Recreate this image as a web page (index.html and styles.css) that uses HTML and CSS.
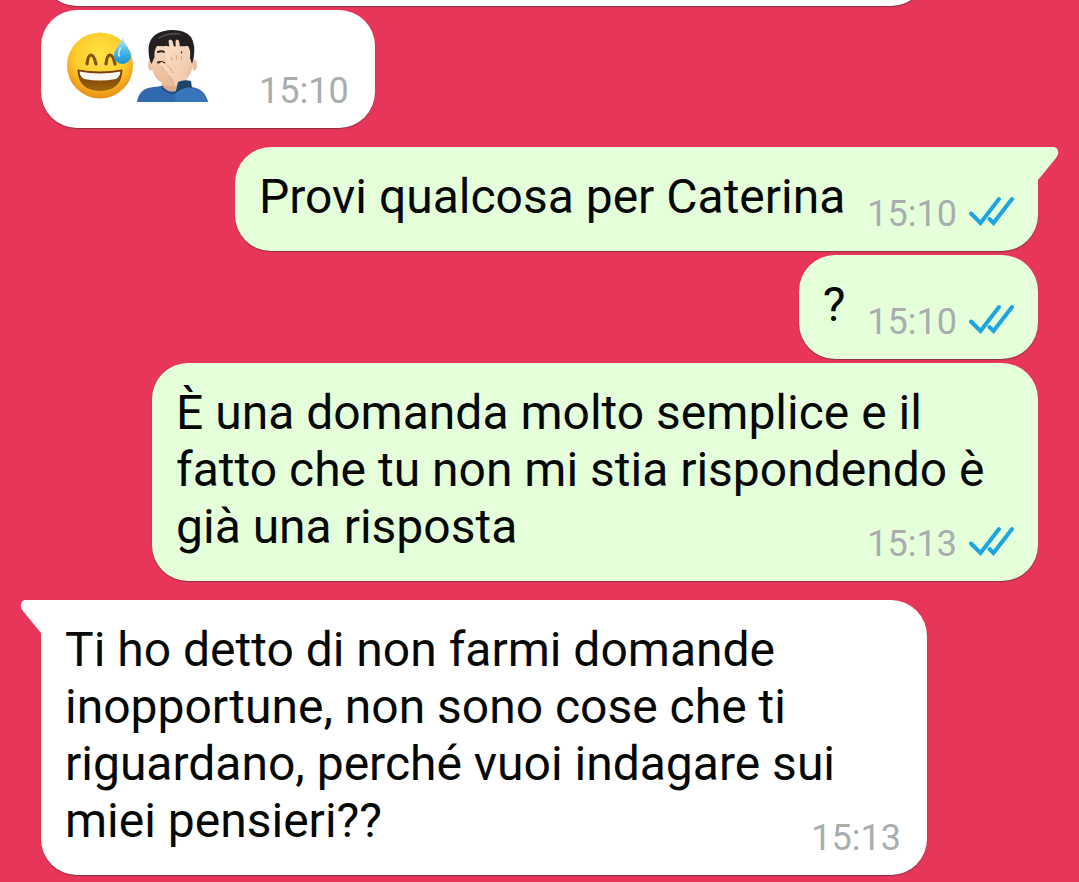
FILE: index.html
```html
<!DOCTYPE html>
<html lang="it">
<head>
<meta charset="utf-8">
<meta name="viewport" content="width=device-width, initial-scale=1">
<title>Chat</title>
<link rel="stylesheet" href="styles.css">
</head>
<body>
<svg class="defs" aria-hidden="true">
  <defs>
    <symbol id="ticks" viewBox="0 0 45 30">
      <path d="M2 17.500 L11.500 27 L30 3 M20.500 23 L24.500 27 L43 3" fill="none" stroke="#1ca5e0" stroke-width="4" stroke-linecap="round" stroke-linejoin="miter"/>
    </symbol>
    <radialGradient id="face" cx=".5" cy=".36" r=".66">
      <stop offset="0" stop-color="#ffe545"/><stop offset=".6" stop-color="#ffcb2c"/><stop offset="1" stop-color="#e98712"/>
    </radialGradient>
    <linearGradient id="drop" x1="0" y1="0" x2="0" y2="1">
      <stop offset="0" stop-color="#c3ecfa"/><stop offset=".5" stop-color="#4fbdec"/><stop offset="1" stop-color="#168fd6"/>
    </linearGradient>
    <linearGradient id="mouth" x1="0" y1="0" x2="0" y2="1">
      <stop offset="0" stop-color="#6b3a06"/><stop offset="1" stop-color="#a0640c"/>
    </linearGradient>
    <linearGradient id="skin" x1="0" y1="0" x2="0" y2="1">
      <stop offset="0" stop-color="#f9dcc3"/><stop offset="1" stop-color="#e8b894"/>
    </linearGradient>
    <linearGradient id="hand" x1="0" y1="0" x2="1" y2="1">
      <stop offset="0" stop-color="#fbe0c8"/><stop offset="1" stop-color="#f1c7a8"/>
    </linearGradient>
  </defs>
</svg>
<main class="chat">
  <div class="bubble in previous"></div>

  <div class="bubble in emoji-bubble">
    <span class="emojis">
      <svg class="emoji" viewBox="0 0 72 76" role="img" aria-label="Faccina sorridente con goccia di sudore">
        <circle cx="35" cy="37.500" r="33" fill="url(#face)"/>
        <path d="M22 36 Q23 27 26 27 Q29 27 31 36 M41 36 Q42 27 45 27 Q48 27 50 36" fill="none" stroke="#85500c" stroke-width="3.200" stroke-linecap="round"/>
        <path d="M12.500 41.500 Q35 45.500 57.500 41.500 Q57 62.500 35 63 Q13 62.500 12.500 41.500Z" fill="url(#mouth)"/>
        <path d="M14.500 43.500 Q35 47.500 55.500 43.500 Q55 49 51 51 Q35 54 19 51 Q15 49 14.500 43.500Z" fill="#f8f6f0"/>
        <path d="M57.500 9 C59 16 66 22 66 27.500 A8.500 8.500 0 0 1 49 27.500 C49 22 55.500 17 57.500 9Z" fill="url(#drop)"/>
        <path d="M55.500 20 Q52.500 26 54.500 28" fill="none" stroke="#d8f4fd" stroke-width="1.500" stroke-linecap="round"/>
      </svg>
      <svg class="emoji" viewBox="0 0 72 76" role="img" aria-label="Uomo che si copre il volto">
        <path d="M25 50 H42 V68 H25Z" fill="#dda986"/>
        <path d="M0 74 Q2 60 17 59 L25 58 Q32 67 43 62 L55 59 Q68 61 71 74Z" fill="#3268ad"/>
        <path d="M24 58 Q32 69 43 63" fill="none" stroke="#244f87" stroke-width="2"/>
        <ellipse cx="13.500" cy="37" rx="2.500" ry="5.500" fill="#ecc09f"/>
        <ellipse cx="57.500" cy="37" rx="2.500" ry="5.500" fill="#ecc09f"/>
        <path d="M14 16 H56 V36 Q55 48 45 55 Q35 62 26 56 Q15 49 14 36Z" fill="url(#skin)"/>
        <path d="M14.500 36 L12.500 31 Q9 14 18 7 Q25 2 36 2 Q48 2 54 9 Q59 17 56.500 31 L55 36 L53 30 Q54 22 51 18 L40 18.500 L20 18 Q17 22 17.500 29Z" fill="#241f20"/>
        <path d="M22 10 Q30 5 42 6" fill="none" stroke="#4b4444" stroke-width="2" stroke-linecap="round"/>
        <path d="M21 24 Q24 22.500 28 24 M43 24.500 H47 M21 34.500 Q24 33.500 27 35" fill="none" stroke="#30231f" stroke-width="2" stroke-linecap="round"/>
        <path d="M38 58 Q36 51 29 46 L23 37 Q22 34 25 34 L30 37 L27 20 Q27 17 30 18 L34 29 L31.500 13 Q33 10 35.500 13 L39 27 L38.500 13 Q40 10 42 13 L44.500 28 L46 20 Q49 18 50 21 L50.500 39 Q49 48 50 57Z" fill="url(#hand)"/>
        <path d="M30 37 Q35 41 36 45 M34 29 L35.500 33 M39 27 L40 32 M44.500 28 V32 M24 38 L30 46 Q35 50 37 56" fill="none" stroke="#d8a581" stroke-width="1"/>
        <path d="M39 74 Q36 65 43 58 L53 60 Q67 63 71 74Z" fill="#3975b9"/>
        <path d="M38.500 65 L41 54 Q47 51 54 53 L55 60 Q46 59 38.500 65Z" fill="#1d456c"/>
      </svg>
    </span>
    <span class="meta"><time>15:10</time></span>
  </div>

  <div class="bubble out first">
    <svg class="tail" viewBox="0 0 22 36" aria-hidden="true"><path d="M0 0 H16 Q20 0 21 4 Q22 7 19 11 L1 33 V36 H0Z"/></svg>
    Provi qualcosa per Caterina
    <span class="meta"><time>15:10</time><svg class="ticks" role="img" aria-label="Letto"><use href="#ticks"/></svg></span>
  </div>

  <div class="bubble out">
    ?
    <span class="meta"><time>15:10</time><svg class="ticks" role="img" aria-label="Letto"><use href="#ticks"/></svg></span>
  </div>

  <div class="bubble out">
    È una domanda molto semplice e il fatto che tu non mi stia rispondendo è già una risposta
    <span class="meta"><time>15:13</time><svg class="ticks" role="img" aria-label="Letto"><use href="#ticks"/></svg></span>
  </div>

  <div class="bubble in first">
    <svg class="tail" viewBox="0 0 22 36" aria-hidden="true"><path d="M22 0 H6 Q2 0 1 4 Q0 7 3 11 L21 33 V36 H22Z"/></svg>
    Ti ho detto di non farmi domande inopportune, non sono cose che ti riguardano, perché vuoi indagare sui miei pensieri??
    <span class="meta"><time>15:13</time></span>
  </div>
</main>
</body>
</html>
```
FILE: styles.css
```css
* {
  box-sizing: border-box;
}

body {
  margin: 0;
  background: #e8365a;
  color: #060806;
  font-family: Roboto, "Liberation Sans", sans-serif;
  font-size: 48px;
  line-height: 57px;
}

.defs {
  position: absolute;
  width: 0;
  height: 0;
}

.chat {
  display: flex;
  flex-direction: column;
  gap: 4px;
  min-height: 100vh;
  padding: 0 41px 7px;
  overflow: hidden;
}

.bubble {
  position: relative;
  display: flow-root;
  max-width: 886px;
  padding: 21px 24px 16px;
  border-radius: 36px;
  box-shadow: 0 1px 1px rgba(70, 50, 50, 0.6);
}

.in {
  align-self: flex-start;
  background: #fff;
}

.out {
  align-self: flex-end;
  background: #e5ffdb;
}

.first {
  margin-top: 15px;
}

.out.first {
  border-top-right-radius: 0;
}

.in.first {
  border-top-left-radius: 0;
}

.previous {
  width: 100%;
  height: 104px;
  margin-top: -98px;
}

.tail {
  position: absolute;
  top: 0;
  width: 22px;
  height: 36px;
}

.out .tail {
  left: calc(100% - 1px);
  fill: #e5ffdb;
}

.in .tail {
  right: calc(100% - 1px);
  fill: #fff;
}

.meta {
  float: right;
  display: flex;
  align-items: center;
  gap: 12px;
  margin-top: 25px;
  margin-left: 22px;
  color: #a8adad;
  font-size: 36px;
  line-height: 42px;
}

.in .meta {
  margin-right: 2px;
}

.ticks {
  width: 45px;
  height: 30px;
  margin-bottom: 6px;
}

.emoji-bubble {
  display: flex;
  align-items: flex-end;
  gap: 28px;
  padding-top: 18px;
}

.emojis {
  display: flex;
  align-self: flex-start;
}

.emoji {
  width: 72px;
  height: 76px;
}

.emoji-bubble .meta {
  margin-top: 42px;
}
```
